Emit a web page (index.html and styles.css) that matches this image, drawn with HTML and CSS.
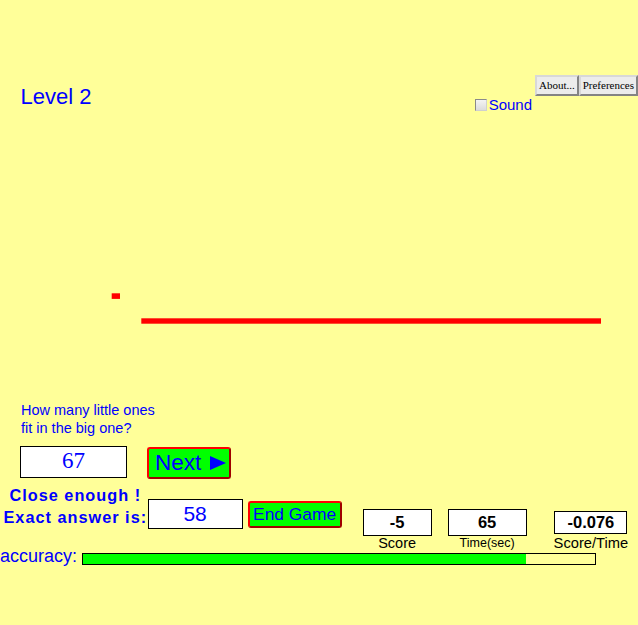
FILE: index.html
```html
<!DOCTYPE html>
<html>
<head>
<meta charset="utf-8">
<link rel="stylesheet" href="styles.css">
</head>
<body>
<div class="page">
  <header class="header">
    <div class="level">Level 2</div>
    <div class="controls">
      <div class="buttons">
        <button class="sysbtn">About...</button><button class="sysbtn">Preferences</button>
      </div>
      <label class="sound"><span class="check"></span>Sound</label>
    </div>
  </header>

  <svg class="stage" width="638" height="282" viewBox="0 0 638 282">
    <rect x="111.7" y="173.3" width="8.3" height="5.6" fill="#ff0000"/>
    <rect x="141.3" y="198.3" width="459.7" height="5.4" fill="#ff0000"/>
  </svg>

  <div class="question">How many little ones<br>fit in the big one?</div>

  <div class="row-guess">
    <div class="guess">67</div>
    <button class="gbtn next">Next<svg class="tri" width="16" height="14" viewBox="0 0 16 14"><polygon points="0,0 16,7 0,14" fill="#0000ff"/></svg></button>
  </div>

  <div class="row-result">
    <div class="verdict">Close enough !<br>Exact answer is:</div>
    <div class="answer">58</div>
    <button class="gbtn endgame">End Game</button>
    <div class="stat stat-score">
      <div class="box">-5</div>
      <div class="lbl">Score</div>
    </div>
    <div class="stat stat-time">
      <div class="box">65</div>
      <div class="lbl small">Time(sec)</div>
    </div>
    <div class="stat stat-rate">
      <div class="box">-0.076</div>
      <div class="lbl wide">Score/Time</div>
    </div>
  </div>

  <div class="row-acc">
    <div class="acc-label">accuracy:</div>
    <div class="bar"><div class="fill" style="width: 86.5%"></div></div>
  </div>
</div>
</body>
</html>
```

FILE: styles.css
```css
html, body {
  margin: 0;
  padding: 0;
  background: #ffff99;
}
body {
  font-family: "Liberation Sans", Arial, sans-serif;
  color: #0000ff;
  width: 638px;
  height: 625px;
  overflow: hidden;
}
.page {
  width: 638px;
}
.header {
  display: flex;
  justify-content: space-between;
  align-items: flex-start;
  height: 120px;
  box-sizing: border-box;
  padding-top: 75px;
}
.level {
  font-size: 22px;
  line-height: 26px;
  margin-top: 8.5px;
  padding-left: 20.5px;
}
.controls {
  display: flex;
  flex-direction: column;
  align-items: flex-end;
}
.buttons {
  display: flex;
}
.sysbtn {
  font-family: "Liberation Serif", "Times New Roman", serif;
  font-weight: normal;
  font-size: 11px;
  color: #000;
  height: 21px;
  padding: 0 2px;
  margin: 0;
  background: #ececec;
  border: 2px outset #d8d8d8;
  border-radius: 0;
  line-height: 15px;
}
.sound {
  display: flex;
  align-items: center;
  font-size: 15px;
  line-height: 18px;
  margin-top: 0;
  margin-right: 106px;
}
.check {
  display: inline-block;
  width: 10px;
  height: 10px;
  border: 1px solid #8a8a8a;
  border-right-color: #d0d0d0;
  border-bottom-color: #d0d0d0;
  background: linear-gradient(#f4f4f4, #dcdcdc);
  margin-right: 2px;
}
.stage {
  display: block;
}
.question {
  height: 44px;
  font-size: 14.5px;
  line-height: 17.6px;
  padding-left: 21px;
  box-sizing: border-box;
}
.row-guess {
  display: flex;
  align-items: flex-start;
  padding-left: 20px;
  height: 38px;
}
.guess {
  width: 107px;
  height: 32px;
  box-sizing: border-box;
  border: 1px solid #000;
  background: #fff;
  font-family: "Liberation Serif", "Times New Roman", serif;
  font-size: 23px;
  line-height: 28px;
  text-align: center;
}
.gbtn {
  font-family: "Liberation Sans", Arial, sans-serif;
  color: #0000ff;
  background: #00ff00;
  border: 2px solid #ff0000;
  border-right-color: #a00000;
  border-bottom-color: #a00000;
  border-radius: 3px;
  margin: 0;
  box-sizing: border-box;
}
.next {
  margin-left: 20px;
  margin-top: 1px;
  width: 84px;
  height: 32px;
  font-size: 22.5px;
  line-height: 28px;
  padding: 0 0 0 6px;
  display: flex;
  align-items: center;
}
.tri {
  margin-left: 9px;
}
.row-result {
  display: flex;
  align-items: flex-start;
  height: 61.5px;
}
.verdict {
  font-weight: bold;
  font-size: 16.3px;
  line-height: 22px;
  letter-spacing: 1px;
  text-align: center;
  padding-left: 3.5px;
}
.answer {
  margin-left: 0.5px;
  margin-top: 15px;
  width: 95px;
  height: 30px;
  box-sizing: border-box;
  border: 1px solid #000;
  background: #fff;
  font-size: 21px;
  line-height: 28px;
  text-align: center;
}
.endgame {
  margin-left: 5px;
  margin-top: 17px;
  width: 94px;
  height: 27px;
  font-size: 17.4px;
  line-height: 23px;
  padding: 0;
  text-align: center;
}
.stat {
  display: flex;
  flex-direction: column;
  align-items: center;
  color: #000;
}
.stat .box {
  box-sizing: border-box;
  border: 1px solid #000;
  background: #fff;
  font-weight: bold;
  font-size: 16.5px;
  text-align: center;
}
.stat-score {
  margin-left: 21px;
  margin-top: 25px;
}
.stat-score .box {
  width: 69px;
  height: 27px;
  line-height: 25px;
}
.stat-time {
  margin-left: 16px;
  margin-top: 25px;
}
.stat-time .box {
  width: 79px;
  height: 27px;
  line-height: 25px;
}
.stat-rate {
  margin-left: 27px;
  margin-top: 27px;
}
.stat-rate .box {
  width: 73px;
  height: 23px;
  line-height: 21px;
}
.lbl {
  font-size: 14.5px;
  line-height: 15px;
  white-space: nowrap;
}
.lbl.small {
  font-size: 12.5px;
}
.lbl.wide {
  font-size: 14.7px;
  margin-top: 2px;
}
.row-acc {
  display: flex;
  align-items: flex-start;
}
.acc-label {
  font-size: 18px;
  line-height: 21px;
}
.bar {
  margin-left: 5px;
  margin-top: 7px;
  width: 514px;
  height: 12px;
  box-sizing: border-box;
  border: 1px solid #000;
  background: #ffff99;
}
.fill {
  height: 100%;
  background: #00ff00;
}
```
